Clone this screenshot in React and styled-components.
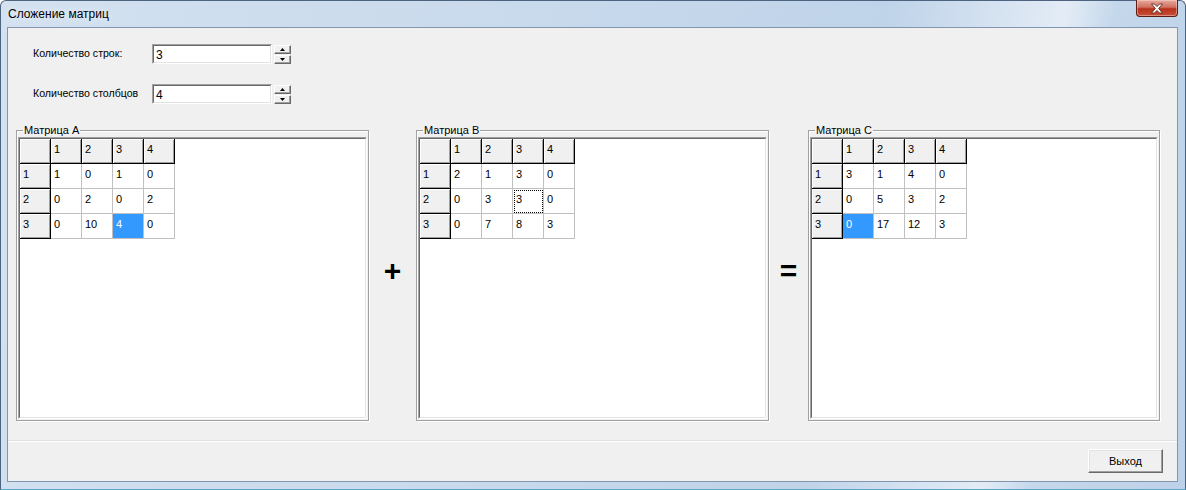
import React from 'react';
import styled, { createGlobalStyle, css } from 'styled-components';

const GlobalStyle = createGlobalStyle`
  html, body {
    margin: 0;
    padding: 0;
    background: #ffffff;
  }
  body {
    font-family: 'Liberation Sans', Arial, sans-serif;
    font-size: 11px;
    color: #000;
  }
`;

const Window = styled.div`
  width: 1186px;
  height: 490px;
  box-sizing: border-box;
  display: flex;
  flex-direction: column;
  padding: 0 7px 7px 6px;
  border-radius: 6px 6px 0 0;
  border: 1px solid #4c6480;
  border-bottom-color: #5aa7c8;
  background: linear-gradient(
    100deg,
    #d3e1f0 0%,
    #c9daec 40%,
    #bfd3e9 70%,
    #e3ecf6 84%,
    #c4d7eb 88%,
    #bdd2e9 100%
  );
`;

const TitleBar = styled.div`
  height: 26px;
  display: flex;
  align-items: flex-start;
  justify-content: space-between;
`;

const Title = styled.div`
  margin-top: 6px;
  margin-left: 1px;
  font-size: 12px;
  color: #000;
  text-shadow: 0 0 6px rgba(255, 255, 255, 0.9);
`;

const CloseButton = styled.div`
  width: 42px;
  height: 17px;
  margin-top: -1px;
  display: flex;
  align-items: center;
  justify-content: center;
  box-sizing: border-box;
  border: 1px solid #5a1c14;
  border-top: none;
  border-radius: 0 0 4px 4px;
  background: linear-gradient(#e7aa9f 0%, #d0705f 45%, #b5321b 55%, #c9503a 100%);
  box-shadow: inset 0 0 0 1px rgba(255, 220, 210, 0.45);
`;

const Client = styled.div`
  flex: 1;
  display: flex;
  flex-direction: column;
  background: #f0f0f0;
  border: 1px solid #8496ad;
`;

const Form = styled.div`
  display: flex;
  flex-direction: column;
  gap: 20px;
  padding: 16px 0 0 25px;
`;

const FieldRow = styled.div`
  display: flex;
  align-items: center;
  height: 20px;
`;

const FieldLabel = styled.div`
  width: 119px;
  margin-top: -3px;
  font-size: 10.6px;
`;

const SpinInput = styled.div`
  width: 120px;
  height: 20px;
  box-sizing: border-box;
  border: 1px solid;
  border-color: #a0a0a0 #ffffff #ffffff #a0a0a0;
  background: #fff;
`;

const SpinInner = styled.div`
  height: 100%;
  box-sizing: border-box;
  border: 1px solid;
  border-color: #696969 #e3e3e3 #e3e3e3 #696969;
  padding: 2px 0 0 2px;
  font-size: 12px;
  line-height: 14px;
`;

const SpinButtons = styled.div`
  display: flex;
  flex-direction: column;
  gap: 1px;
  margin-left: 2px;
`;

const SpinButton = styled.div`
  width: 17px;
  height: 9px;
  box-sizing: border-box;
  display: flex;
  align-items: center;
  justify-content: center;
  background: #f0f0f0;
  border: 1px solid;
  border-color: #ffffff #696969 #696969 #ffffff;
  box-shadow: inset -1px -1px 0 #a0a0a0;
`;

const Matrices = styled.div`
  display: flex;
  align-items: center;
  margin-top: 20px;
  padding-left: 8px;
`;

const GroupBox = styled.fieldset`
  width: ${(p) => p.$width}px;
  height: 297px;
  box-sizing: border-box;
  margin: 0;
  padding: 0 1px 1px 1px;
  min-width: 0;
  display: flex;
  flex-direction: column;
  border: 1px solid #a0a0a0;
  box-shadow: 1px 1px 0 #fff, inset 1px 1px 0 #fff;
`;

const Legend = styled.legend`
  margin-left: 5px;
  padding: 0 1px;
  font-size: 11px;
  line-height: 13px;
`;

const GridFrame = styled.div`
  flex: 1;
  border: 1px solid;
  border-color: #a0a0a0 #ffffff #ffffff #a0a0a0;
  display: flex;
`;

const GridInner = styled.div`
  flex: 1;
  border: 1px solid;
  border-color: #696969 #e3e3e3 #e3e3e3 #696969;
  background: #fff;
`;

const Table = styled.div`
  display: grid;
  grid-template-columns: repeat(5, 31px);
  grid-auto-rows: 25px;
`;

const Cell = styled.div`
  box-sizing: border-box;
  padding: 4px 0 0 3px;
  font-size: 11px;
  line-height: 13px;
  border-right: 1px solid #c0c0c0;
  border-bottom: 1px solid #c0c0c0;
  background: #fff;
  ${(p) =>
    p.$head &&
    css`
      background: #f0f0f0;
      border-right-color: #000;
      border-bottom-color: #000;
      box-shadow: inset 1px 1px 0 #fff, inset -1px -1px 0 #a0a0a0;
    `}
  ${(p) =>
    p.$selected &&
    css`
      background: #3399ff;
      color: #fff;
    `}
  ${(p) =>
    p.$focus &&
    css`
      outline: 1px dotted #000;
      outline-offset: -2px;
    `}
`;

const Sign = styled.div`
  width: ${(p) => p.$width}px;
  text-align: center;
  font-family: 'Liberation Sans', Arial, sans-serif;
  font-weight: bold;
  font-size: 30px;
  line-height: 30px;
  margin-top: -4px;
`;

const Separator = styled.div`
  margin-top: 19px;
  border-top: 1px solid #e0e0e0;
  border-bottom: 1px solid #ffffff;
`;

const Footer = styled.div`
  flex: 1;
  display: flex;
  justify-content: flex-end;
  align-items: flex-start;
  padding: 7px 14px 0 0;
`;

const Button = styled.button`
  width: 75px;
  height: 24px;
  box-sizing: border-box;
  padding: 0;
  font-family: 'Liberation Sans', Arial, sans-serif;
  font-size: 11px;
  color: #000;
  background: #f0f0f0;
  border: 1px solid;
  border-color: #ffffff #696969 #696969 #ffffff;
  box-shadow: inset -1px -1px 0 #a0a0a0, inset 1px 1px 0 #e3e3e3;
`;

const Arrow = ({ up }) => (
  <svg width="5" height="3" viewBox="0 0 5 3">
    <path d={up ? 'M2.5 0 L5 3 L0 3 Z' : 'M0 0 L5 0 L2.5 3 Z'} fill="#000" />
  </svg>
);

const SpinEdit = ({ value }) => (
  <>
    <SpinInput>
      <SpinInner>{value}</SpinInner>
    </SpinInput>
    <SpinButtons>
      <SpinButton>
        <Arrow up />
      </SpinButton>
      <SpinButton>
        <Arrow />
      </SpinButton>
    </SpinButtons>
  </>
);

const Matrix = ({ title, width, data, selected, focus }) => (
  <GroupBox $width={width}>
    <Legend>{title}</Legend>
    <GridFrame>
      <GridInner>
        <Table>
          <Cell $head />
          {[1, 2, 3, 4].map((c) => (
            <Cell $head key={'h' + c}>
              {c}
            </Cell>
          ))}
          {data.map((row, r) => (
            <React.Fragment key={r}>
              <Cell $head>{r + 1}</Cell>
              {row.map((v, c) => (
                <Cell
                  key={c}
                  $selected={selected && selected[0] === r && selected[1] === c}
                  $focus={focus && focus[0] === r && focus[1] === c}
                >
                  {v}
                </Cell>
              ))}
            </React.Fragment>
          ))}
        </Table>
      </GridInner>
    </GridFrame>
  </GroupBox>
);

const A = [
  [1, 0, 1, 0],
  [0, 2, 0, 2],
  [0, 10, 4, 0],
];
const B = [
  [2, 1, 3, 0],
  [0, 3, 3, 0],
  [0, 7, 8, 3],
];
const C = [
  [3, 1, 4, 0],
  [0, 5, 3, 2],
  [0, 17, 12, 3],
];

const App = () => {
  return (
    <>
      <GlobalStyle />
      <Window>
        <TitleBar>
          <Title>Сложение матриц</Title>
          <CloseButton>
            <svg width="14" height="11" viewBox="0 0 14 11">
              <path
                d="M1.5 1 L4.5 1 L7 3.6 L9.5 1 L12.5 1 L8.6 5.5 L12.5 10 L9.5 10 L7 7.4 L4.5 10 L1.5 10 L5.4 5.5 Z"
                fill="#ffffff"
                stroke="#4a1a12"
                strokeWidth="0.8"
                strokeLinejoin="round"
              />
            </svg>
          </CloseButton>
        </TitleBar>
        <Client>
          <Form>
            <FieldRow>
              <FieldLabel>Количество строк:</FieldLabel>
              <SpinEdit value="3" />
            </FieldRow>
            <FieldRow>
              <FieldLabel>Количество столбцов</FieldLabel>
              <SpinEdit value="4" />
            </FieldRow>
          </Form>
          <Matrices>
            <Matrix title="Матрица А" width={353} data={A} selected={[2, 2]} />
            <Sign $width={47}>+</Sign>
            <Matrix title="Матрица В" width={353} data={B} focus={[1, 2]} />
            <Sign $width={39}>=</Sign>
            <Matrix title="Матрица С" width={352} data={C} selected={[2, 0]} />
          </Matrices>
          <Separator />
          <Footer>
            <Button>Выход</Button>
          </Footer>
        </Client>
      </Window>
    </>
  );
};

export default App;
